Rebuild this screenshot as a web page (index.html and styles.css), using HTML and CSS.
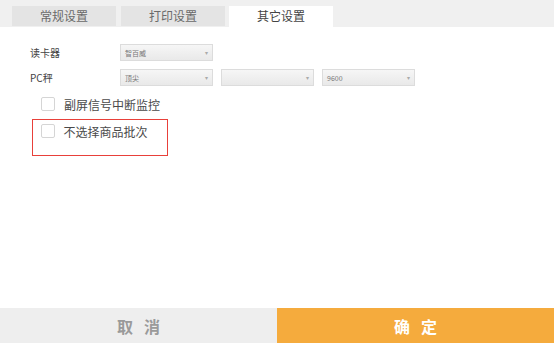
FILE: index.html
```html
<!DOCTYPE html>
<html>
<head>
<meta charset="utf-8">
<link rel="stylesheet" href="styles.css">
</head>
<body>
<div class="page">
  <div class="tabbar">
    <div class="tab">常规设置</div>
    <div class="tab">打印设置</div>
    <div class="tab active">其它设置</div>
  </div>
  <div class="content">
    <div class="row">
      <div class="label">读卡器</div>
      <div class="select"><span>智百威</span><i class="caret">▾</i></div>
    </div>
    <div class="row">
      <div class="label">PC秤</div>
      <div class="select"><span>顶尖</span><i class="caret">▾</i></div>
      <div class="select"><span></span><i class="caret">▾</i></div>
      <div class="select"><span>9600</span><i class="caret">▾</i></div>
    </div>
    <div class="checks">
      <label class="check"><span class="box"></span><span class="ctext">副屏信号中断监控</span></label>
      <div class="highlight">
        <label class="check"><span class="box"></span><span class="ctext">不选择商品批次</span></label>
      </div>
    </div>
  </div>
  <div class="footer">
    <div class="btn cancel">取消</div>
    <div class="btn ok">确定</div>
  </div>
</div>
</body>
</html>
```
FILE: styles.css
```css
* { box-sizing: border-box; }
html, body { margin: 0; padding: 0; }
body {
  width: 554px;
  height: 343px;
  background: #ffffff;
  font-family: "Noto Sans CJK SC", "Noto Sans", sans-serif;
  color: #333;
  overflow: hidden;
}
.page {
  height: 343px;
  display: flex;
  flex-direction: column;
}
.tabbar {
  height: 27px;
  background: #f0f0f0;
  display: flex;
  align-items: flex-end;
  padding-left: 12px;
  gap: 5px;
}
.tab {
  width: 104px;
  height: 20px;
  background: #e4e4e4;
  color: #6a6a6a;
  font-size: 12px;
  line-height: 20px;
  text-align: center;
  margin-bottom: 1px;
}
.tab.active {
  background: #ffffff;
  color: #444;
  height: 21px;
  margin-bottom: 0;
  margin-left: -1px;
}
.content {
  flex: 1;
  padding: 17px 0 0 30px;
}
.row {
  display: flex;
  align-items: center;
  height: 17px;
  margin-bottom: 8px;
  gap: 8px;
}
.label {
  width: 82px;
  font-size: 10px;
  color: #444;
}
.select {
  width: 93px;
  height: 17px;
  background: linear-gradient(#f6f6f6, #e9e9e9);
  border: 1px solid #dcdcdc;
  display: flex;
  align-items: center;
  justify-content: space-between;
  padding: 0 4px;
  font-size: 7px;
  color: #777;
}
.caret {
  font-style: normal;
  font-size: 6px;
  color: #aaa;
}
.checks {
  padding-left: 2px;
  margin-top: 4px;
}
.check {
  display: flex;
  align-items: center;
  height: 20px;
  gap: 9px;
  padding-left: 9px;
}
.box {
  width: 14px;
  height: 14px;
  border: 1px solid #d5d5d5;
  border-radius: 2px;
  background: #fff;
}
.ctext {
  font-size: 12px;
  color: #4a4a4a;
}
.highlight {
  width: 136px;
  height: 37px;
  border: 1.5px solid #e8403a;
  margin-top: 5px;
  padding-top: 1px;
}
.highlight .check { padding-left: 7.5px; }
.footer {
  height: 35px;
  display: flex;
}
.btn {
  flex: 1;
  display: flex;
  align-items: center;
  justify-content: center;
  font-size: 16px;
  font-weight: bold;
  letter-spacing: 11px;
  padding-left: 11px;
}
.cancel {
  background: #eeeeee;
  color: #9a9a9a;
}
.ok {
  background: #f5ab3d;
  color: #ffffff;
}
```
